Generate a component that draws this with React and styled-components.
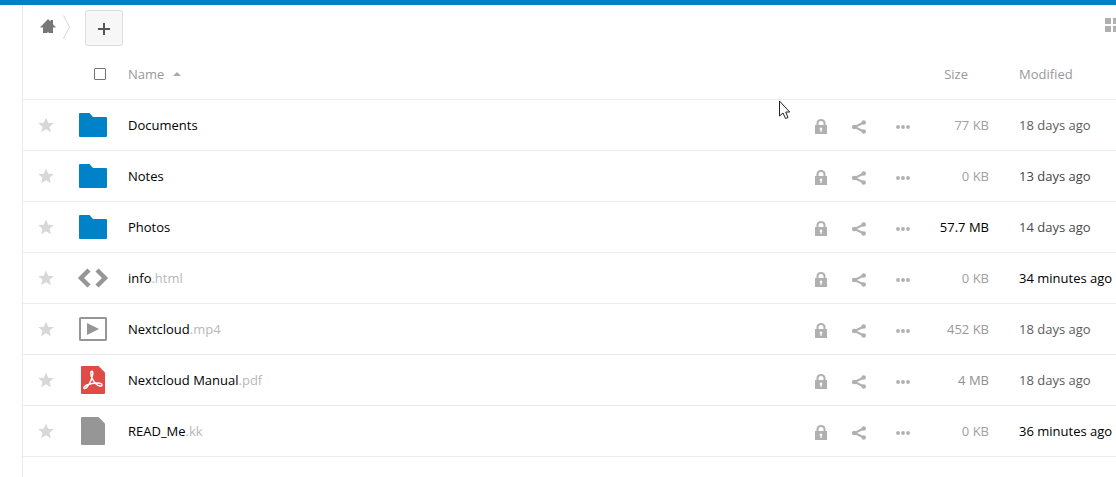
import React from 'react';
import styled, { createGlobalStyle } from 'styled-components';

const GlobalStyle = createGlobalStyle`
  * { box-sizing: border-box; }
  body {
    margin: 0;
    background: #fff;
    color: #000;
    font: 13px/20px "Open Sans", sans-serif;
    overflow: hidden;
  }
  button { border: 0; padding: 0; background: none; font: inherit; color: inherit; cursor: pointer; }
  a { color: inherit; text-decoration: none; }
  svg { display: block; }
`;

const Page = styled.div`
  min-height: 100vh;
  display: flex;
  flex-direction: column;
`;

const TopBar = styled.header`
  height: 5px;
  background: #0082c9;
`;

const Body = styled.div`
  flex: 1;
  display: flex;
  padding-left: 22px;
`;

const Main = styled.main`
  flex: 1;
  min-width: 0;
  border-left: 1px solid #ebebeb;
  overflow: hidden;
`;

const Controls = styled.div`
  display: flex;
  align-items: center;
  height: 44px;
  padding-left: 16px;
`;

const HomeLink = styled.a`
  display: flex;
  align-items: center;
  padding-bottom: 2px;
`;

const NewButton = styled.button`
  display: flex;
  align-items: center;
  justify-content: center;
  width: 38px;
  height: 36px;
  margin: 2px 0 0 14px;
  padding-top: 2px;
  background: #f7f7f7;
  border: 1px solid #dcdcdc;
  border-radius: 3px;
`;

const ViewToggle = styled.button`
  margin: 0 -4px 4px auto;
`;

const FileTable = styled.table`
  width: 100%;
  table-layout: fixed;
  border-collapse: separate;
  border-spacing: 0;
`;

const Col = styled.col`
  width: ${(p) => p.$width};
`;

const Cell = styled.td`
  height: 51px;
  padding: 0;
  border-bottom: 1px solid #ebebeb;
  vertical-align: middle;
  white-space: nowrap;
`;

const HeadCell = styled(Cell).attrs({ as: 'th' })`
  color: #999;
  font-weight: 400;
  text-align: ${(p) => p.$align || 'left'};
  padding-right: ${(p) => (p.$align === 'right' ? '51px' : '0')};
`;

const SelectAll = styled.input`
  appearance: none;
  display: block;
  width: 12px;
  height: 12px;
  margin: 0 0 0 23px;
  border: 1px solid #777;
  border-radius: 1px;
`;

const SortButton = styled.button`
  display: inline-flex;
  align-items: center;
  gap: 9px;
`;

const StarButton = styled.button`
  display: block;
  margin-left: 15px;
`;

const FileIcon = styled.span`
  display: flex;
  align-items: center;
  justify-content: center;
  width: 32px;
  height: 32px;
  margin-left: 6px;
`;

const Extension = styled.span`
  color: #b8b8b8;
`;

const Actions = styled.div`
  display: grid;
  grid-template-columns: 44px 32px 56px;
  padding-top: 3px;
`;

const ActionButton = styled.button`
  display: flex;
  align-items: center;
  justify-content: center;
  height: 20px;
`;

const SizeCell = styled(Cell)`
  padding-right: 30px;
  text-align: right;
  color: ${(p) => p.$color};
`;

const DateCell = styled(Cell)`
  color: ${(p) => p.$color};
`;

const Pointer = styled.svg`
  position: absolute;
  left: 778px;
  top: 100px;
  pointer-events: none;
`;

const Home = () => (
  <svg width="18" height="16" viewBox="0 0 18 16" fill="#777">
    <path d="M9 1 1 9.500h3V15h4.500v-1h1v1H14V9.500h3l-3-3.200V2h-2.500v1.600z" />
  </svg>
);

const Crumb = () => (
  <svg width="14" height="26" viewBox="0 0 14 26" fill="none" stroke="#d8d8d8">
    <path d="M6.5 1.5 12.5 13l-6 11.5" />
  </svg>
);

const Plus = () => (
  <svg width="12" height="12" viewBox="0 0 12 12" fill="#555">
    <path d="M5 0h2v5h5v2H7v5H5V7H0V5h5z" />
  </svg>
);

const GridIcon = () => (
  <svg width="15" height="14" viewBox="0 0 15 14" fill="#b0b0b0">
    <path d="M0 0h6v6H0zM8 0h6v6H8zM0 8h6v6H0zM8 8h6v6H8z" />
  </svg>
);

const SortArrow = () => (
  <svg width="8" height="4" viewBox="0 0 8 4" fill="#aaa">
    <path d="M0 4 4 0l4 4z" />
  </svg>
);

const Star = () => (
  <svg width="16" height="16" viewBox="0 0 16 16" fill="#d8d8d8">
    <path d="m8 .5 2.2 5.2 5.6.4-4.3 3.6 1.4 5.6L8 12.3l-4.9 3 1.4-5.6L.2 6.1l5.6-.4z" />
  </svg>
);

const Lock = () => (
  <svg width="14" height="16" viewBox="0 0 14 16">
    <path d="M3.500 7V4a3.500 3 0 0 1 7 0v3" fill="none" stroke="#b0b0b0" strokeWidth="2" />
    <path d="M1 6h12v9H1z" fill="#b0b0b0" />
    <path d="M7 8.500a1.400 1.400 0 0 1 .6 2.600V13H6.400v-1.900A1.400 1.400 0 0 1 7 8.500z" fill="#fff" />
  </svg>
);

const Share = () => (
  <svg width="16" height="16" viewBox="0 0 16 16" fill="#b0b0b0">
    <path d="M12.800 3.500 3.500 8l9.300 4.500" fill="none" stroke="#b0b0b0" strokeWidth="2" />
    <circle cx="12.700" cy="3.500" r="2.300" />
    <circle cx="3.200" cy="8" r="2.300" />
    <circle cx="12.700" cy="12.500" r="2.300" />
  </svg>
);

const More = () => (
  <svg width="14" height="4" viewBox="0 0 14 4" fill="#b0b0b0">
    <circle cx="2" cy="2" r="1.900" />
    <circle cx="7" cy="2" r="1.900" />
    <circle cx="12" cy="2" r="1.900" />
  </svg>
);

const drawings = {
  folder: (
    <path
      fill="#0082c9"
      d="M3 4h9.500l3.500 4h13a1 1 0 0 1 1 1v18a1 1 0 0 1-1 1H3a1 1 0 0 1-1-1V5a1 1 0 0 1 1-1z"
    />
  ),
  code: (
    <path
      fill="none"
      stroke="#969696"
      strokeWidth="4.500"
      d="m12 8-8 8 8 8M20 8l8 8-8 8"
    />
  ),
  video: (
    <>
      <rect x="3" y="5" width="26" height="22" rx="0.500" fill="none" stroke="#969696" strokeWidth="2" />
      <path fill="#969696" d="m10 10 12 6-12 6z" />
    </>
  ),
  pdf: (
    <>
      <path fill="#e04b46" d="M5 2h16.500L28 8.500V29a1 1 0 0 1-1 1H5a1 1 0 0 1-1-1V3a1 1 0 0 1 1-1z" />
      <path
        fill="none"
        stroke="#fff"
        strokeWidth="1.500"
        strokeLinejoin="round"
        d="M15 7.200c-1.700 0-1.500 3.500.2 7.300 1.800 3.800 5.200 7.200 8 7.600 2.500.2 2.600-2.200-.2-2.800-4-.7-9.500.3-13 1.700-2.900 1.200-3.700 2.700-2.800 3.400 1.300.9 3.600-1.800 5.500-5.400 2.600-4.800 4.100-11.800 2.300-11.800z"
      />
    </>
  ),
  file: (
    <path fill="#969696" d="M5 2h16.500L28 8.500V29a1 1 0 0 1-1 1H5a1 1 0 0 1-1-1V3a1 1 0 0 1 1-1z" />
  ),
};

const files = [
  { name: 'Documents', type: 'folder', size: '77 KB', modified: '18 days ago', dateColor: '#5c5c5c' },
  { name: 'Notes', type: 'folder', size: '0 KB', modified: '13 days ago', dateColor: '#444' },
  { name: 'Photos', type: 'folder', size: '57.7 MB', sizeColor: '#000', modified: '14 days ago', dateColor: '#4a4a4a' },
  { name: 'info', ext: '.html', type: 'code', size: '0 KB', modified: '34 minutes ago', dateColor: '#000' },
  { name: 'Nextcloud', ext: '.mp4', type: 'video', size: '452 KB', sizeColor: '#999', modified: '18 days ago', dateColor: '#5c5c5c' },
  { name: 'Nextcloud Manual', ext: '.pdf', type: 'pdf', size: '4 MB', sizeColor: '#909090', modified: '18 days ago', dateColor: '#5c5c5c' },
  { name: 'READ_Me', ext: '.kk', type: 'file', size: '0 KB', modified: '36 minutes ago', dateColor: '#000' },
];

function FileRow({ file }) {
  return (
    <tr>
      <Cell>
        <StarButton aria-label="Favorite"><Star /></StarButton>
      </Cell>
      <Cell>
        <FileIcon>
          <svg width="32" height="32" viewBox="0 0 32 32">{drawings[file.type]}</svg>
        </FileIcon>
      </Cell>
      <Cell>
        <a href="#file">{file.name}<Extension>{file.ext}</Extension></a>
      </Cell>
      <Cell>
        <Actions>
          <ActionButton aria-label="Lock"><Lock /></ActionButton>
          <ActionButton aria-label="Share"><Share /></ActionButton>
          <ActionButton aria-label="More actions"><More /></ActionButton>
        </Actions>
      </Cell>
      <SizeCell $color={file.sizeColor || '#a0a0a0'}>{file.size}</SizeCell>
      <DateCell $color={file.dateColor}>{file.modified}</DateCell>
    </tr>
  );
}

export default function App() {
  return (
    <Page>
      <GlobalStyle />
      <TopBar />
      <Body>
        <Main>
          <Controls>
            <HomeLink href="#home" aria-label="Home"><Home /></HomeLink>
            <Crumb />
            <NewButton aria-label="New"><Plus /></NewButton>
            <ViewToggle aria-label="Grid view"><GridIcon /></ViewToggle>
          </Controls>
          <FileTable>
            <colgroup>
              <Col $width="48px" />
              <Col $width="57px" />
              <Col $width="auto" />
              <Col $width="132px" />
              <Col $width="88px" />
              <Col $width="97px" />
            </colgroup>
            <thead>
              <tr>
                <HeadCell />
                <HeadCell><SelectAll type="checkbox" aria-label="Select all" /></HeadCell>
                <HeadCell><SortButton>Name<SortArrow /></SortButton></HeadCell>
                <HeadCell />
                <HeadCell $align="right"><SortButton>Size</SortButton></HeadCell>
                <HeadCell><SortButton>Modified</SortButton></HeadCell>
              </tr>
            </thead>
            <tbody>
              {files.map((file) => <FileRow key={file.name} file={file} />)}
            </tbody>
          </FileTable>
        </Main>
      </Body>
      <Pointer width="13" height="20" viewBox="0 0 13 20">
        <path d="M1.500 1v15l3.500-3 2.500 5.500 2.500-1L7.700 12h4z" fill="#fff" stroke="#222" />
      </Pointer>
    </Page>
  );
}
